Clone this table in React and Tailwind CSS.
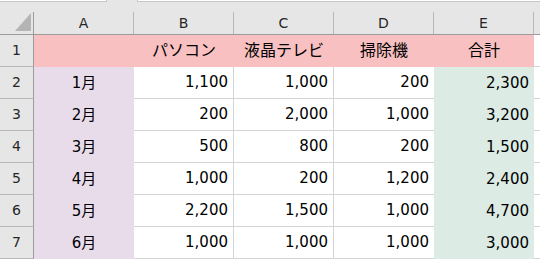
const font = { fontFamily: '"DejaVu Sans", "Noto Sans CJK JP", sans-serif' };

const cols = ['A', 'B', 'C', 'D', 'E'];
const heads = ['', 'パソコン', '液晶テレビ', '掃除機', '合計'];

const rows = [
  ['1月', '1,100', '1,000', '200', '2,300'],
  ['2月', '200', '2,000', '1,000', '3,200'],
  ['3月', '500', '800', '200', '1,500'],
  ['4月', '1,000', '200', '1,200', '2,400'],
  ['5月', '2,200', '1,500', '1,000', '4,700'],
  ['6月', '1,000', '1,000', '1,000', '3,000'],
];

function RowHead({ n }) {
  return (
    <div className="h-[32px] bg-[#e6e6e6] border-r border-r-[#9c9c9c] border-b border-b-[#b8b8b8] flex items-center justify-center text-[14px] text-[#262626]">
      {n}
    </div>
  );
}

export default function App() {
  return (
    <div className="w-[540px] h-[261px] overflow-hidden bg-white text-black" style={font}>
      {/* toolbar strip with name box and formula bar edges */}
      <div className="h-[12px] bg-[#e6e6e6] flex items-start">
        <div className="w-[107px] h-[2px] bg-white border-b border-r border-[#c6c6c6]" />
        <div className="flex-1 h-[2px] ml-[30px] bg-white border-b border-l border-[#c6c6c6]" />
      </div>

      {/* column headers */}
      <div className="grid grid-cols-[34px_100px_100px_100px_100px_100px_1fr] h-[23px] bg-[#e6e6e6] border-b border-b-[#9c9c9c]">
        <div className="relative border-r border-r-[#9c9c9c]">
          <svg className="absolute left-[15px] top-[1px]" width="16" height="18" viewBox="0 0 16 18">
            <polygon points="0,18 16,18 16,0" fill="#b4b4b4" />
          </svg>
        </div>
        {cols.map((c) => (
          <div key={c} className="border-r border-r-[#b8b8b8] flex items-center justify-center text-[14px] text-[#262626]">
            {c}
          </div>
        ))}
        <div />
      </div>

      <div className="grid grid-cols-[34px_100px_100px_100px_100px_100px_1fr]">
        {/* row 1: item names */}
        <RowHead n={1} />
        <div className="h-[32px] bg-[#f8c0c0]" />
        {heads.slice(1).map((h) => (
          <div key={h} className="h-[32px] bg-[#f8c0c0] flex items-center justify-center text-[16px]">
            {h}
          </div>
        ))}
        <div className="h-[32px] border-b border-b-[#d4d4d4]" />

        {rows.map((r, i) => (
          <div key={r[0]} className="contents">
            <RowHead n={i + 2} />
            <div className="h-[32px] bg-[#e8dcea] flex items-center justify-center text-[15px]">
              {r[0]}
            </div>
            <div className="h-[32px] border-r border-b border-[#d4d4d4] flex items-center justify-end pr-[5px] text-[15px]">
              {r[1]}
            </div>
            <div className="h-[32px] border-r border-b border-[#d4d4d4] flex items-center justify-end pr-[5px] text-[15px]">
              {r[2]}
            </div>
            <div className="h-[32px] border-b border-[#d4d4d4] flex items-center justify-end pr-[5px] text-[15px]">
              {r[3]}
            </div>
            <div className="h-[32px] bg-[#dcebe3] flex items-center justify-end pr-[5px] text-[15px]">
              {r[4]}
            </div>
            <div className="h-[32px] border-b border-[#d4d4d4]" />
          </div>
        ))}
      </div>
    </div>
  );
}
